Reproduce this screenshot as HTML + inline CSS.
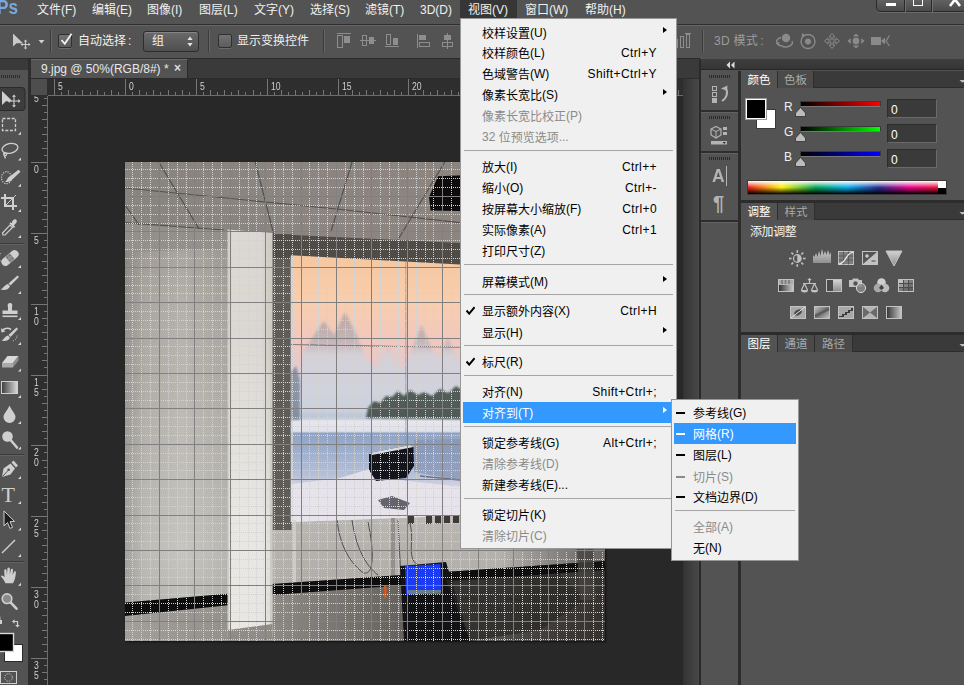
<!DOCTYPE html><html lang="zh"><head><meta charset="utf-8"><title>Photoshop</title><style>
*{box-sizing:border-box;margin:0;padding:0}
html,body{width:964px;height:685px;overflow:hidden;background:#535353}
body{position:relative;font-family:"Liberation Sans","Noto Sans CJK SC",sans-serif;font-size:12px;color:#e6e6e6}
.a{position:absolute}
.t{position:absolute;white-space:nowrap;line-height:1}
#menubar{left:0;top:0;width:964px;height:24px;background:#535353}
#menubar .t{top:4px;font-size:12px;color:#f0f0f0}
#optbar{left:0;top:24px;width:964px;height:34px;background:#535353}
.vsep{position:absolute;width:2px;border-left:1px solid #3c3c3c;border-right:1px solid #656565}
#tabbar{left:28px;top:58px;width:672px;height:21px;background:#3a3a3a;border-top:1px solid #2b2b2b;border-bottom:1px solid #2b2b2b}
#doctab{left:30px;top:59px;width:158px;height:19px;background:#535353;border-right:1px solid #2a2a2a;border-top:1px solid #6a6a6a;border-left:1px solid #666}
#canvas{left:48px;top:96px;width:635px;height:589px;background:#282828}
#hruler{left:31px;top:79px;width:652px;height:17px;background:#2e2e2e;border-bottom:1px solid #6c6c6c;overflow:hidden}
#vruler{left:31px;top:96px;width:17px;height:589px;background:#2e2e2e;border-right:1px solid #6c6c6c;overflow:hidden}
#rcorner{left:31px;top:79px;width:17px;height:17px;background:#4e4e4e;border-right:1px solid #2e2e2e;border-bottom:1px solid #2e2e2e}
.rl{position:absolute;font-size:10px;color:#d0d0d0;line-height:1;transform:scaleX(.86);transform-origin:0 0}
#vscroll{left:683px;top:79px;width:16px;height:606px;background:linear-gradient(90deg,#333 0,#3c3c3c 40%,#484848 100%)}
#toolbar{left:0;top:70px;width:28px;height:615px;background:#535353}
#tbgap{left:28px;top:59px;width:3px;height:626px;background:#2e2e2e}
.menu{position:absolute;background:#f0f0f0;border:1px solid #979797;color:#000;font-size:12px}
.mi{position:absolute;left:2px;height:21px;line-height:21px;white-space:nowrap}
.mi .l{position:absolute;left:19px;top:2px}.mi .l i{font-style:normal;position:relative;top:-1px}
.mi .s{position:absolute;right:17px;top:1px;letter-spacing:.4px}
.mi.d{color:#8a8a8a}
.mi.h{background:#3399ff;color:#fff}
.msep{position:absolute;height:1px;background:#a5a5a5}
.arr{position:absolute;width:0;height:0;border-left:4px solid #000;border-top:3.5px solid transparent;border-bottom:3.5px solid transparent}
.h .arr{border-left-color:#fff}
.chk{position:absolute;left:3px;top:6px}
.dash{position:absolute;left:2px;top:10px;width:9px;height:2px;background:#000}
.d .dash{background:#8a8a8a}.h .dash{background:#fff}
.panelhdr{position:absolute;background:#3a3a3a;border-bottom:1px solid #2a2a2a}
.ptab{position:absolute;height:17px;font-size:11.5px;line-height:19px;text-align:center;color:#a9a9a9;background:#4a4a4a;border-right:1px solid #2e2e2e}
.ptab.on{background:#535353;color:#fff}
.inp{position:absolute;width:50px;height:19px;background:#3a3a3a;border:1px solid #6a6a6a;border-top-color:#2c2c2c;border-left-color:#2c2c2c;color:#fff;font-size:12px;line-height:20px;padding-left:3px}
</style></head><body>
<div id="menubar" class="a">
<div class="a" style="left:460px;top:0;width:57px;height:19px;background:#363636"></div>
<div class="t" style="left:-3px;top:-3px;font-size:20px;font-weight:bold;color:#78a8dd;transform:scaleX(.86);transform-origin:0 0">Ps</div>
<div class="t" style="left:37px">文件(F)</div>
<div class="t" style="left:92px">编辑(E)</div>
<div class="t" style="left:147px">图像(I)</div>
<div class="t" style="left:199px">图层(L)</div>
<div class="t" style="left:254px">文字(Y)</div>
<div class="t" style="left:310px">选择(S)</div>
<div class="t" style="left:365px">滤镜(T)</div>
<div class="t" style="left:420px">3D(D)</div>
<div class="t" style="left:468px">视图(V)</div>
<div class="t" style="left:525px">窗口(W)</div>
<div class="t" style="left:585px">帮助(H)</div>
<div class="a" style="left:876px;top:-5px;width:92px;height:17px;border:1px solid #2a2a2a;border-radius:0 0 4px 4px;background:linear-gradient(#6a6a6a,#4a4a4a);box-shadow:0 1px 0 #6a6a6a"><div class="a" style="left:27px;top:0;width:1px;height:16px;background:#2a2a2a"></div><div class="a" style="left:28px;top:0;width:1px;height:16px;background:#707070"></div><div class="a" style="left:54px;top:0;width:1px;height:16px;background:#2a2a2a"></div><div class="a" style="left:55px;top:0;width:1px;height:16px;background:#707070"></div><div class="a" style="left:9px;top:7px;width:10px;height:3px;background:#fff"></div><div class="a" style="left:36px;top:-2px;width:10px;height:12px;border:2px solid #fff;border-width:1.5px"></div><svg class="a" style="left:70px;top:0" width="16" height="11" viewBox="0 0 16 11"><path d="M3 -3L13 10M13 -3L3 10" stroke="#fff" stroke-width="2.6"/></svg></div>
</div>
<div id="optbar" class="a">
<div class="a" style="left:0;top:0;width:964px;height:1px;background:#303030"></div><div class="a" style="left:0;top:1px;width:964px;height:1px;background:#646464"></div>
<svg class="a" style="left:10px;top:8px" width="36" height="18" viewBox="10 32 36 18"><path d="M13 33.5 L13 46.5 L16.5 43.2 L23 43.2 Z" fill="#c9c9c9"/><g stroke="#c9c9c9" stroke-width="1.2" fill="#c9c9c9"><path d="M25.5 40.5V48.5M21.5 44.5H29.5" fill="none"/><path d="M25.5 39.5l-1.8 2h3.6zM25.5 49.5l-1.8-2h3.6zM20.5 44.5l2-1.8v3.6zM30.5 44.5l-2-1.8v3.6z" stroke="none"/></g><path d="M38.5 40 L44.5 40 L41.5 43.5Z" fill="#d0d0d0"/></svg>
<div class="vsep" style="left:50px;top:6px;height:23px"></div>
<div class="a" style="left:58px;top:10px;width:14px;height:14px;background:linear-gradient(#727272,#5c5c5c);border:1px solid #303030;border-radius:2px;box-shadow:0 1px 0 #6a6a6a"></div>
<svg class="a" style="left:59px;top:8px" width="15" height="15" viewBox="0 0 15 15"><path d="M2.5 8 L5.8 11.8 L12.5 1.8" fill="none" stroke="#f2f2f2" stroke-width="1.8"/></svg>
<div class="t" style="left:78px;top:10px;font-size:12px;color:#f0f0f0;top:11px">自动选择<span style="margin-left:2px">:</span></div>
<div class="a" style="left:143px;top:7px;width:56px;height:21px;background:linear-gradient(#6a6a6a,#4f4f4f);border:1px solid #2d2d2d;border-radius:3px;box-shadow:inset 0 1px 0 #858585"></div>
<div class="t" style="left:152px;top:10px;font-size:12px;color:#f0f0f0;top:11px">组</div>
<svg class="a" style="left:186px;top:11px" width="8" height="13" viewBox="0 0 8 13"><path d="M4 1.5L6.6 5H1.4Z M4 11.5L6.6 8H1.4Z" fill="#e6e6e6"/></svg>
<div class="vsep" style="left:208px;top:6px;height:23px"></div>
<div class="a" style="left:218px;top:10px;width:14px;height:14px;background:linear-gradient(#727272,#5c5c5c);border:1px solid #303030;border-radius:2px;box-shadow:0 1px 0 #6a6a6a"></div>
<div class="t" style="left:237px;top:10px;font-size:12px;color:#f0f0f0;top:11px">显示变换控件</div>
<div class="vsep" style="left:323px;top:6px;height:23px"></div>
<svg class="a" style="left:330px;top:0" width="140" height="35" viewBox="330 24 140 35" fill="none" stroke="#8e8e8e" stroke-width="1" shape-rendering="crispEdges"><path d="M337 33.5H351"/><rect x="337.5" y="35.5" width="5" height="12"/><rect x="344" y="36" width="6" height="7" fill="#8e8e8e" stroke="none"/><path d="M360 40.5H376"/><rect x="362.5" y="35.5" width="4" height="10"/><rect x="369" y="37" width="5" height="7" fill="#8e8e8e" stroke="none"/><path d="M385 46.5H399"/><rect x="386.5" y="34.5" width="4" height="10"/><rect x="393" y="38" width="5" height="7" fill="#8e8e8e" stroke="none"/><path d="M417.5 34V48"/><rect x="419" y="35" width="7" height="5" fill="#8e8e8e" stroke="none"/><rect x="419.5" y="42.5" width="10" height="4"/><path d="M447.5 33V49"/><rect x="444" y="35" width="7" height="5" fill="#8e8e8e" stroke="none"/><rect x="442.5" y="42.5" width="10" height="4"/></svg>
<svg class="a" style="left:672px;top:0" width="30" height="35" viewBox="672 24 30 35" fill="none" stroke="#8e8e8e" shape-rendering="crispEdges"><rect x="674.5" y="39.5" width="3" height="8"/><rect x="680.5" y="36.5" width="3" height="11"/><rect x="686.5" y="34.5" width="3" height="13"/><path d="M685 33.5H691"/></svg>
<div class="vsep" style="left:702px;top:6px;height:23px"></div>
<div class="t" style="left:714px;top:10px;font-size:12px;color:#9c9c9c;letter-spacing:.3px;top:11px">3D 模式<span style="margin-left:2px">:</span></div>
<svg class="a" style="left:770px;top:0" width="125" height="35" viewBox="770 24 125 35" fill="none" stroke="#8a8a8a" stroke-width="1.4"><circle cx="786" cy="38" r="4.2" fill="#8a8a8a" stroke="none"/><path d="M781 37.5C776 39 775 43 779 45.5 M779 45.5l-0.5-3.5 M779 45.5l3.6 0.2 M782 46.5C788 48 794 45 792 41"/><circle cx="808" cy="41.5" r="7"/><circle cx="808" cy="41.5" r="3" fill="#8a8a8a" stroke="none"/><path d="M802 33l3.5 2.5l-3.8 1.2z" fill="#8a8a8a" stroke="none"/><path d="M832 33.5l3 3.5h-2v3h3v-2l3.5 3l-3.5 3v-2h-3v3h2l-3 3.5l-3-3.5h2v-3h-3v2l-3.5-3l3.5-3v2h3v-3h-2z" stroke-width="1"/><circle cx="856" cy="41" r="3.4" fill="#8a8a8a" stroke="none"/><path d="M856 33.5l3.2 3h-6.4zM856 48.5l3.2-3h-6.4zM847.5 41l3.2-3v6zM864.5 41l-3.2-3v6z" fill="#8a8a8a" stroke="none"/><rect x="871" y="37" width="10" height="8" fill="#8a8a8a" stroke="none"/><path d="M881 41l4-3.5v7z" fill="#8a8a8a" stroke="none"/><path d="M889.5 35.5l-3.5 5.5l3.5 5" stroke-width="1.2"/></svg>
</div>
<div id="tabbar" class="a"></div>
<div id="doctab" class="a"><div class="t" style="left:10px;top:3px;font-size:12px;color:#e8e8e8">9.jpg @ 50%(RGB/8#) *</div><div class="t" style="left:143px;top:2px;font-size:12px;color:#ddd;font-weight:bold">×</div></div>
<div id="canvas" class="a"></div>
<svg class="a" style="left:125px;top:162px;box-shadow:1px 1px 2px rgba(0,0,0,.6)" width="480" height="479" viewBox="125 162 480 479">
<defs><filter id="bl" x="-5%" y="-5%" width="110%" height="110%"><feGaussianBlur stdDeviation="1.6"/></filter><filter id="bl1"><feGaussianBlur stdDeviation="0.8"/></filter>
<linearGradient id="gceil" gradientUnits="userSpaceOnUse" x1="125" y1="162" x2="420" y2="300"><stop offset="0" stop-color="#888480"/><stop offset=".5" stop-color="#8b8581"/><stop offset="1" stop-color="#8c847f"/></linearGradient>
<linearGradient id="gwall" gradientUnits="userSpaceOnUse" x1="0" x2="0" y1="250" y2="600"><stop offset="0" stop-color="#a5a19a"/><stop offset=".15" stop-color="#b0ada6"/><stop offset=".45" stop-color="#b9b6b0"/><stop offset=".85" stop-color="#c4c2bd"/><stop offset="1" stop-color="#bdbbb6"/></linearGradient><linearGradient id="gwl" gradientUnits="userSpaceOnUse" x1="125" x2="228" y1="0" y2="0"><stop offset="0" stop-color="#000" stop-opacity=".16"/><stop offset=".2" stop-color="#000" stop-opacity=".03"/><stop offset=".55" stop-color="#fff" stop-opacity=".05"/><stop offset="1" stop-color="#000" stop-opacity=".06"/></linearGradient>
<linearGradient id="gcol" x1="0" x2="1" y1="0" y2="0"><stop offset="0" stop-color="#cfccc6"/><stop offset=".12" stop-color="#dcd9d3"/><stop offset=".75" stop-color="#dad7d1"/><stop offset="1" stop-color="#cbc8c2"/></linearGradient>
<linearGradient id="gscr" gradientUnits="userSpaceOnUse" x1="0" x2="0" y1="255" y2="522">
<stop offset="0" stop-color="#f5c79f"/><stop offset=".17" stop-color="#f8ceae"/><stop offset=".32" stop-color="#f1c8bd"/><stop offset=".43" stop-color="#e2cbd0"/>
<stop offset=".47" stop-color="#d9d3dc"/><stop offset=".524" stop-color="#d2d7e1"/><stop offset=".61" stop-color="#bcc6d6"/><stop offset=".622" stop-color="#e6e6ec"/><stop offset=".66" stop-color="#e0e1ea"/><stop offset=".668" stop-color="#90a3c3"/>
<stop offset=".75" stop-color="#a2b2cf"/><stop offset=".824" stop-color="#b6c0d6"/><stop offset=".88" stop-color="#dcdae5"/><stop offset="1" stop-color="#e4e0e6"/></linearGradient>
<linearGradient id="gmt" gradientUnits="userSpaceOnUse" x1="0" x2="0" y1="310" y2="415"><stop offset="0" stop-color="#b3a3a3" stop-opacity=".92"/><stop offset=".3" stop-color="#bfb2b6" stop-opacity=".88"/><stop offset=".43" stop-color="#d3d1d9" stop-opacity=".92"/><stop offset="1" stop-color="#cdd2dd" stop-opacity=".88"/></linearGradient>
<linearGradient id="gfloor" gradientUnits="userSpaceOnUse" x1="125" x2="605" y1="0" y2="0"><stop offset="0" stop-color="#a29e99"/><stop offset=".3" stop-color="#8e8a85"/><stop offset=".55" stop-color="#696561"/><stop offset=".75" stop-color="#534f4c"/><stop offset="1" stop-color="#4e4a47"/></linearGradient>
<linearGradient id="gwallr" x1="0" x2="0" y1="0" y2="1"><stop offset="0" stop-color="#bcb9b4"/><stop offset="1" stop-color="#a9a6a1"/></linearGradient>
<linearGradient id="gdk" gradientUnits="userSpaceOnUse" x1="500" x2="605" y1="0" y2="0"><stop offset="0" stop-color="#000" stop-opacity="0"/><stop offset="1" stop-color="#1a1716" stop-opacity=".5"/></linearGradient><linearGradient id="gcw" gradientUnits="userSpaceOnUse" x1="0" x2="0" y1="330" y2="520"><stop offset="0" stop-color="#fff" stop-opacity="0"/><stop offset="1" stop-color="#fff" stop-opacity=".38"/></linearGradient></defs>
<rect x="125" y="162" width="480" height="479" fill="url(#gceil)"/>
<g stroke="#4b4845" stroke-width="1.2" fill="none" opacity=".85"><path d="M158.7 162L212.8 251.7"/><path d="M255.3 162L274.7 238"/><path d="M352 162L330.8 232"/><path d="M444.8 162L390.7 251.7"/><path d="M125 188L336.6 209L460 222.7L605 240"/><path d="M125 222.7L224 230"/><path d="M125 205L150 240"/><path d="M540 162L505 258"/></g>
<polygon points="125,224 228,231 228,250 125,252" fill="#938f8a"/>
<polygon points="125,252 228,249 228,641 125,641" fill="url(#gwall)"/>
<polygon points="125,252 228,249 228,641 125,641" fill="url(#gwl)"/>
<polygon points="272,236 605,250 605,641 272,641" fill="#6e6a65"/>
<rect x="272" y="500" width="333" height="141" fill="url(#gwallr)"/>
<rect x="272.5" y="234" width="19" height="296" fill="#5f5c58"/>
<polygon points="272.5,234 460,243 605,250 605,275 272.5,258" fill="#4f4c48"/>
<polygon points="429,197 438,176.3 605,170 605,214 430.5,210.5" fill="#0d0b0b"/>
<polygon points="227.5,229.5 272.5,233 272.5,637 227.5,637" fill="url(#gcol)"/>
<rect x="229" y="330" width="41" height="307" fill="url(#gcw)"/>
<polygon points="290.8,255.3 605,272.3 605,510 290.8,522" fill="url(#gscr)"/>
<rect x="290.8" y="256" width="2" height="266" fill="#c9d4ee" opacity=".8"/>
<path d="M296 412 L303 352 L312 338 L324 321 L334 335 L345 312 L357 336 L366 360 L377 368 L388.8 347 L399 372 L408 360 L421.6 325 L433 352 L440 356 L448 338 L459 362 L470 350 L480 330 L495 360 L520 340 L540 365 L605 350 L605 412 Z" fill="url(#gmt)" filter="url(#bl)"/>
<path d="M291 344.5 L362 346 L605 349" stroke="#5a5560" stroke-width="1" opacity=".7"/>
<rect x="405" y="262" width="1.5" height="255" fill="#8e8a94" opacity=".45"/>
<path d="M291 372 L296 366 L300 380 L300 420 L291 420Z" fill="#5a6a80" opacity=".6" filter="url(#bl1)"/>
<path d="M366 418 L368 408 L374 401 L380 403 L386 396 L392 397 L398 391 L404 396 L410 390 L418 395 L424 392 L432 396 L440 389 L448 393 L456 386 L462 390 L480 384 L520 388 L560 380 L605 384 L605 418 L520 420 Z" fill="#3f4b45" opacity=".88" filter="url(#bl1)"/>
<path d="M291 484 L340 478 L372 468 L400 480 L470 488 L605 482 L605 510 L291 522Z" fill="#e7e3ea" opacity=".9"/><path d="M414 440 L605 436 L605 478 L470 482 L414 472Z" fill="#8593b2" opacity=".7"/>
<path d="M369 453 L395 448 L410 445 L413.5 447 L414 466 L406 478 L376 481 L369 470Z" fill="#15161c"/>
<path d="M369 453 L410 445 L413.5 447 L372 455Z" fill="#dcdce4"/>
<path d="M378 500 L392 496 L410 503 L404 510 L384 508Z" fill="#3a3a44" opacity=".75"/>
<path d="M420 476 L460 480 L605 500" stroke="#3a3a44" stroke-width="1.5" opacity=".6" fill="none"/>
<g fill="#3d3a38"><rect x="408" y="516" width="6" height="8"/><rect x="426" y="516" width="6" height="8"/><rect x="435" y="515.5" width="6" height="8"/><rect x="444" y="515" width="6" height="8"/><rect x="453" y="515" width="6" height="8"/></g>
<rect x="293" y="520" width="3" height="121" fill="#d4d2ce" opacity=".8"/>
<rect x="391" y="518" width="4" height="123" fill="#8f8c88" opacity=".9"/>
<g stroke="#3c3a40" stroke-width="1" fill="none" opacity=".85"><path d="M337 520 C340 545 348 560 362 572 C372 578 376 560 368 522"/><path d="M352 520 C356 548 366 566 378 575"/><path d="M398 520 L402 600"/><path d="M410 524 C415 540 405 560 420 566"/></g>
<polygon points="125,602.4 228,593.7 228,641 125,641" fill="url(#gfloor)"/>
<polygon points="125,602.4 228,593.7 228,605.3 125,616" fill="#0e0d0d"/>
<polygon points="272.5,584 605,561 605,641 272.5,641" fill="url(#gfloor)"/>
<polygon points="272.5,584 605,561 605,570 272.5,595" fill="#0f0e0e"/>
<polygon points="227.5,560 272.5,560 272.5,637 227.5,637" fill="url(#gcol)"/>
<rect x="229" y="560" width="41" height="77" fill="#fff" opacity=".38"/>
<polygon points="227.5,630 272.5,624 272.5,641 227.5,641" fill="#8f8b86"/>
<rect x="500" y="510" width="105" height="131" fill="url(#gdk)"/>
<polygon points="400,566 446,562 470,641 404,641" fill="#131214"/>
<polygon points="446,580 560,574 585,600 540,630 470,641" fill="#2b2927" opacity=".75"/>
<polygon points="575,520 592,520 596,600 580,600" fill="#45423f" opacity=".8"/>
<polygon points="405,566 440.5,564 441.5,592 406,595" fill="#1b3bf2"/>
<rect x="407" y="590" width="34" height="4" fill="#7a8c7a" opacity=".8"/>
<path d="M461 600 C480 590 500 620 520 612 C530 606 520 596 505 600" stroke="#2a2826" stroke-width="1.5" fill="none" opacity=".7"/>
<rect x="384" y="586" width="2.5" height="12" fill="#d2581e"/><rect x="398" y="604" width="2" height="8" fill="#d2581e"/>
<g shape-rendering="crispEdges" stroke-width="1">
<path d="M132.5 162V641M141.5 162V641M150.5 162V641M168.5 162V641M177.5 162V641M186.5 162V641M203.5 162V641M212.5 162V641M221.5 162V641M239.5 162V641M248.5 162V641M256.5 162V641M274.5 162V641M283.5 162V641M292.5 162V641M309.5 162V641M318.5 162V641M327.5 162V641M345.5 162V641M354.5 162V641M363.5 162V641M380.5 162V641M389.5 162V641M398.5 162V641M416.5 162V641M425.5 162V641M433.5 162V641M451.5 162V641M460.5 162V641M469.5 162V641M486.5 162V641M495.5 162V641M504.5 162V641M522.5 162V641M531.5 162V641M540.5 162V641M557.5 162V641M566.5 162V641M575.5 162V641M593.5 162V641M602.5 162V641M125 169.5H605M125 178.5H605M125 187.5H605M125 205.5H605M125 214.5H605M125 223.5H605M125 240.5H605M125 249.5H605M125 258.5H605M125 276.5H605M125 285.5H605M125 293.5H605M125 311.5H605M125 320.5H605M125 329.5H605M125 346.5H605M125 355.5H605M125 364.5H605M125 382.5H605M125 391.5H605M125 400.5H605M125 417.5H605M125 426.5H605M125 435.5H605M125 453.5H605M125 462.5H605M125 470.5H605M125 488.5H605M125 497.5H605M125 506.5H605M125 523.5H605M125 532.5H605M125 541.5H605M125 559.5H605M125 568.5H605M125 577.5H605M125 594.5H605M125 603.5H605M125 612.5H605M125 630.5H605M125 639.5H605" stroke="#d2d2d2" stroke-dasharray="1 1" fill="none"/>
<path d="M159.5 162V641M194.5 162V641M230.5 162V641M265.5 162V641M301.5 162V641M336.5 162V641M371.5 162V641M407.5 162V641M442.5 162V641M478.5 162V641M513.5 162V641M548.5 162V641M584.5 162V641M125 196.5H605M125 231.5H605M125 267.5H605M125 302.5H605M125 338.5H605M125 373.5H605M125 408.5H605M125 444.5H605M125 479.5H605M125 515.5H605M125 550.5H605M125 585.5H605M125 621.5H605" stroke="#808080" fill="none"/>
</g>
</svg>
<div id="hruler" class="a"><div class="a" style="left:23px;bottom:0;width:1px;height:16px;background:#767676"></div><div class="rl" style="left:27px;top:3px">5</div><div class="a" style="left:30px;bottom:0;width:1px;height:3px;background:#767676"></div><div class="a" style="left:37px;bottom:0;width:1px;height:5px;background:#767676"></div><div class="a" style="left:44px;bottom:0;width:1px;height:3px;background:#767676"></div><div class="a" style="left:51px;bottom:0;width:1px;height:5px;background:#767676"></div><div class="a" style="left:59px;bottom:0;width:1px;height:3px;background:#767676"></div><div class="a" style="left:66px;bottom:0;width:1px;height:5px;background:#767676"></div><div class="a" style="left:73px;bottom:0;width:1px;height:3px;background:#767676"></div><div class="a" style="left:80px;bottom:0;width:1px;height:5px;background:#767676"></div><div class="a" style="left:87px;bottom:0;width:1px;height:3px;background:#767676"></div><div class="a" style="left:94px;bottom:0;width:1px;height:16px;background:#767676"></div><div class="rl" style="left:98px;top:3px">0</div><div class="a" style="left:101px;bottom:0;width:1px;height:3px;background:#767676"></div><div class="a" style="left:108px;bottom:0;width:1px;height:5px;background:#767676"></div><div class="a" style="left:115px;bottom:0;width:1px;height:3px;background:#767676"></div><div class="a" style="left:122px;bottom:0;width:1px;height:5px;background:#767676"></div><div class="a" style="left:129px;bottom:0;width:1px;height:3px;background:#767676"></div><div class="a" style="left:137px;bottom:0;width:1px;height:5px;background:#767676"></div><div class="a" style="left:144px;bottom:0;width:1px;height:3px;background:#767676"></div><div class="a" style="left:151px;bottom:0;width:1px;height:5px;background:#767676"></div><div class="a" style="left:158px;bottom:0;width:1px;height:3px;background:#767676"></div><div class="a" style="left:165px;bottom:0;width:1px;height:16px;background:#767676"></div><div class="rl" style="left:169px;top:3px">5</div><div class="a" style="left:172px;bottom:0;width:1px;height:3px;background:#767676"></div><div class="a" style="left:179px;bottom:0;width:1px;height:5px;background:#767676"></div><div class="a" style="left:186px;bottom:0;width:1px;height:3px;background:#767676"></div><div class="a" style="left:193px;bottom:0;width:1px;height:5px;background:#767676"></div><div class="a" style="left:200px;bottom:0;width:1px;height:3px;background:#767676"></div><div class="a" style="left:207px;bottom:0;width:1px;height:5px;background:#767676"></div><div class="a" style="left:214px;bottom:0;width:1px;height:3px;background:#767676"></div><div class="a" style="left:222px;bottom:0;width:1px;height:5px;background:#767676"></div><div class="a" style="left:229px;bottom:0;width:1px;height:3px;background:#767676"></div><div class="a" style="left:236px;bottom:0;width:1px;height:16px;background:#767676"></div><div class="rl" style="left:240px;top:3px">10</div><div class="a" style="left:243px;bottom:0;width:1px;height:3px;background:#767676"></div><div class="a" style="left:250px;bottom:0;width:1px;height:5px;background:#767676"></div><div class="a" style="left:257px;bottom:0;width:1px;height:3px;background:#767676"></div><div class="a" style="left:264px;bottom:0;width:1px;height:5px;background:#767676"></div><div class="a" style="left:271px;bottom:0;width:1px;height:3px;background:#767676"></div><div class="a" style="left:278px;bottom:0;width:1px;height:5px;background:#767676"></div><div class="a" style="left:285px;bottom:0;width:1px;height:3px;background:#767676"></div><div class="a" style="left:292px;bottom:0;width:1px;height:5px;background:#767676"></div><div class="a" style="left:299px;bottom:0;width:1px;height:3px;background:#767676"></div><div class="a" style="left:307px;bottom:0;width:1px;height:16px;background:#767676"></div><div class="rl" style="left:311px;top:3px">15</div><div class="a" style="left:314px;bottom:0;width:1px;height:3px;background:#767676"></div><div class="a" style="left:321px;bottom:0;width:1px;height:5px;background:#767676"></div><div class="a" style="left:328px;bottom:0;width:1px;height:3px;background:#767676"></div><div class="a" style="left:335px;bottom:0;width:1px;height:5px;background:#767676"></div><div class="a" style="left:342px;bottom:0;width:1px;height:3px;background:#767676"></div><div class="a" style="left:349px;bottom:0;width:1px;height:5px;background:#767676"></div><div class="a" style="left:356px;bottom:0;width:1px;height:3px;background:#767676"></div><div class="a" style="left:363px;bottom:0;width:1px;height:5px;background:#767676"></div><div class="a" style="left:370px;bottom:0;width:1px;height:3px;background:#767676"></div><div class="a" style="left:377px;bottom:0;width:1px;height:16px;background:#767676"></div><div class="rl" style="left:381px;top:3px">20</div><div class="a" style="left:384px;bottom:0;width:1px;height:3px;background:#767676"></div><div class="a" style="left:392px;bottom:0;width:1px;height:5px;background:#767676"></div><div class="a" style="left:399px;bottom:0;width:1px;height:3px;background:#767676"></div><div class="a" style="left:406px;bottom:0;width:1px;height:5px;background:#767676"></div><div class="a" style="left:413px;bottom:0;width:1px;height:3px;background:#767676"></div><div class="a" style="left:420px;bottom:0;width:1px;height:5px;background:#767676"></div><div class="a" style="left:427px;bottom:0;width:1px;height:3px;background:#767676"></div><div class="a" style="left:434px;bottom:0;width:1px;height:5px;background:#767676"></div><div class="a" style="left:441px;bottom:0;width:1px;height:3px;background:#767676"></div><div class="a" style="left:448px;bottom:0;width:1px;height:16px;background:#767676"></div><div class="rl" style="left:452px;top:3px">25</div><div class="a" style="left:455px;bottom:0;width:1px;height:3px;background:#767676"></div><div class="a" style="left:462px;bottom:0;width:1px;height:5px;background:#767676"></div><div class="a" style="left:470px;bottom:0;width:1px;height:3px;background:#767676"></div><div class="a" style="left:477px;bottom:0;width:1px;height:5px;background:#767676"></div><div class="a" style="left:484px;bottom:0;width:1px;height:3px;background:#767676"></div><div class="a" style="left:491px;bottom:0;width:1px;height:5px;background:#767676"></div><div class="a" style="left:498px;bottom:0;width:1px;height:3px;background:#767676"></div><div class="a" style="left:505px;bottom:0;width:1px;height:5px;background:#767676"></div><div class="a" style="left:512px;bottom:0;width:1px;height:3px;background:#767676"></div><div class="a" style="left:519px;bottom:0;width:1px;height:16px;background:#767676"></div><div class="rl" style="left:523px;top:3px">30</div><div class="a" style="left:526px;bottom:0;width:1px;height:3px;background:#767676"></div><div class="a" style="left:533px;bottom:0;width:1px;height:5px;background:#767676"></div><div class="a" style="left:540px;bottom:0;width:1px;height:3px;background:#767676"></div><div class="a" style="left:547px;bottom:0;width:1px;height:5px;background:#767676"></div><div class="a" style="left:555px;bottom:0;width:1px;height:3px;background:#767676"></div><div class="a" style="left:562px;bottom:0;width:1px;height:5px;background:#767676"></div><div class="a" style="left:569px;bottom:0;width:1px;height:3px;background:#767676"></div><div class="a" style="left:576px;bottom:0;width:1px;height:5px;background:#767676"></div><div class="a" style="left:583px;bottom:0;width:1px;height:3px;background:#767676"></div><div class="a" style="left:590px;bottom:0;width:1px;height:16px;background:#767676"></div><div class="rl" style="left:594px;top:3px">35</div><div class="a" style="left:597px;bottom:0;width:1px;height:3px;background:#767676"></div><div class="a" style="left:604px;bottom:0;width:1px;height:5px;background:#767676"></div><div class="a" style="left:611px;bottom:0;width:1px;height:3px;background:#767676"></div><div class="a" style="left:618px;bottom:0;width:1px;height:5px;background:#767676"></div><div class="a" style="left:625px;bottom:0;width:1px;height:3px;background:#767676"></div><div class="a" style="left:632px;bottom:0;width:1px;height:5px;background:#767676"></div><div class="a" style="left:640px;bottom:0;width:1px;height:3px;background:#767676"></div><div class="a" style="left:647px;bottom:0;width:1px;height:5px;background:#767676"></div></div>
<div id="vruler" class="a"><div class="rl" style="left:3px;top:-2px">5</div><div class="a" style="top:2px;right:0;height:1px;width:3px;background:#767676"></div><div class="a" style="top:9px;right:0;height:1px;width:5px;background:#767676"></div><div class="a" style="top:16px;right:0;height:1px;width:3px;background:#767676"></div><div class="a" style="top:23px;right:0;height:1px;width:5px;background:#767676"></div><div class="a" style="top:31px;right:0;height:1px;width:3px;background:#767676"></div><div class="a" style="top:38px;right:0;height:1px;width:5px;background:#767676"></div><div class="a" style="top:45px;right:0;height:1px;width:3px;background:#767676"></div><div class="a" style="top:52px;right:0;height:1px;width:5px;background:#767676"></div><div class="a" style="top:59px;right:0;height:1px;width:3px;background:#767676"></div><div class="a" style="top:66px;right:0;height:1px;width:16px;background:#767676"></div><div class="rl" style="left:3px;top:69px">0</div><div class="a" style="top:73px;right:0;height:1px;width:3px;background:#767676"></div><div class="a" style="top:80px;right:0;height:1px;width:5px;background:#767676"></div><div class="a" style="top:87px;right:0;height:1px;width:3px;background:#767676"></div><div class="a" style="top:94px;right:0;height:1px;width:5px;background:#767676"></div><div class="a" style="top:101px;right:0;height:1px;width:3px;background:#767676"></div><div class="a" style="top:109px;right:0;height:1px;width:5px;background:#767676"></div><div class="a" style="top:116px;right:0;height:1px;width:3px;background:#767676"></div><div class="a" style="top:123px;right:0;height:1px;width:5px;background:#767676"></div><div class="a" style="top:130px;right:0;height:1px;width:3px;background:#767676"></div><div class="a" style="top:137px;right:0;height:1px;width:16px;background:#767676"></div><div class="rl" style="left:3px;top:140px">5</div><div class="a" style="top:144px;right:0;height:1px;width:3px;background:#767676"></div><div class="a" style="top:151px;right:0;height:1px;width:5px;background:#767676"></div><div class="a" style="top:158px;right:0;height:1px;width:3px;background:#767676"></div><div class="a" style="top:165px;right:0;height:1px;width:5px;background:#767676"></div><div class="a" style="top:172px;right:0;height:1px;width:3px;background:#767676"></div><div class="a" style="top:179px;right:0;height:1px;width:5px;background:#767676"></div><div class="a" style="top:186px;right:0;height:1px;width:3px;background:#767676"></div><div class="a" style="top:194px;right:0;height:1px;width:5px;background:#767676"></div><div class="a" style="top:201px;right:0;height:1px;width:3px;background:#767676"></div><div class="a" style="top:208px;right:0;height:1px;width:16px;background:#767676"></div><div class="rl" style="left:3px;top:211px">1</div><div class="rl" style="left:3px;top:221px">0</div><div class="a" style="top:215px;right:0;height:1px;width:3px;background:#767676"></div><div class="a" style="top:222px;right:0;height:1px;width:5px;background:#767676"></div><div class="a" style="top:229px;right:0;height:1px;width:3px;background:#767676"></div><div class="a" style="top:236px;right:0;height:1px;width:5px;background:#767676"></div><div class="a" style="top:243px;right:0;height:1px;width:3px;background:#767676"></div><div class="a" style="top:250px;right:0;height:1px;width:5px;background:#767676"></div><div class="a" style="top:257px;right:0;height:1px;width:3px;background:#767676"></div><div class="a" style="top:264px;right:0;height:1px;width:5px;background:#767676"></div><div class="a" style="top:271px;right:0;height:1px;width:3px;background:#767676"></div><div class="a" style="top:279px;right:0;height:1px;width:16px;background:#767676"></div><div class="rl" style="left:3px;top:282px">1</div><div class="rl" style="left:3px;top:292px">5</div><div class="a" style="top:286px;right:0;height:1px;width:3px;background:#767676"></div><div class="a" style="top:293px;right:0;height:1px;width:5px;background:#767676"></div><div class="a" style="top:300px;right:0;height:1px;width:3px;background:#767676"></div><div class="a" style="top:307px;right:0;height:1px;width:5px;background:#767676"></div><div class="a" style="top:314px;right:0;height:1px;width:3px;background:#767676"></div><div class="a" style="top:321px;right:0;height:1px;width:5px;background:#767676"></div><div class="a" style="top:328px;right:0;height:1px;width:3px;background:#767676"></div><div class="a" style="top:335px;right:0;height:1px;width:5px;background:#767676"></div><div class="a" style="top:342px;right:0;height:1px;width:3px;background:#767676"></div><div class="a" style="top:349px;right:0;height:1px;width:16px;background:#767676"></div><div class="rl" style="left:3px;top:352px">2</div><div class="rl" style="left:3px;top:362px">0</div><div class="a" style="top:356px;right:0;height:1px;width:3px;background:#767676"></div><div class="a" style="top:364px;right:0;height:1px;width:5px;background:#767676"></div><div class="a" style="top:371px;right:0;height:1px;width:3px;background:#767676"></div><div class="a" style="top:378px;right:0;height:1px;width:5px;background:#767676"></div><div class="a" style="top:385px;right:0;height:1px;width:3px;background:#767676"></div><div class="a" style="top:392px;right:0;height:1px;width:5px;background:#767676"></div><div class="a" style="top:399px;right:0;height:1px;width:3px;background:#767676"></div><div class="a" style="top:406px;right:0;height:1px;width:5px;background:#767676"></div><div class="a" style="top:413px;right:0;height:1px;width:3px;background:#767676"></div><div class="a" style="top:420px;right:0;height:1px;width:16px;background:#767676"></div><div class="rl" style="left:3px;top:423px">2</div><div class="rl" style="left:3px;top:433px">5</div><div class="a" style="top:427px;right:0;height:1px;width:3px;background:#767676"></div><div class="a" style="top:434px;right:0;height:1px;width:5px;background:#767676"></div><div class="a" style="top:442px;right:0;height:1px;width:3px;background:#767676"></div><div class="a" style="top:449px;right:0;height:1px;width:5px;background:#767676"></div><div class="a" style="top:456px;right:0;height:1px;width:3px;background:#767676"></div><div class="a" style="top:463px;right:0;height:1px;width:5px;background:#767676"></div><div class="a" style="top:470px;right:0;height:1px;width:3px;background:#767676"></div><div class="a" style="top:477px;right:0;height:1px;width:5px;background:#767676"></div><div class="a" style="top:484px;right:0;height:1px;width:3px;background:#767676"></div><div class="a" style="top:491px;right:0;height:1px;width:16px;background:#767676"></div><div class="rl" style="left:3px;top:494px">3</div><div class="rl" style="left:3px;top:504px">0</div><div class="a" style="top:498px;right:0;height:1px;width:3px;background:#767676"></div><div class="a" style="top:505px;right:0;height:1px;width:5px;background:#767676"></div><div class="a" style="top:512px;right:0;height:1px;width:3px;background:#767676"></div><div class="a" style="top:519px;right:0;height:1px;width:5px;background:#767676"></div><div class="a" style="top:527px;right:0;height:1px;width:3px;background:#767676"></div><div class="a" style="top:534px;right:0;height:1px;width:5px;background:#767676"></div><div class="a" style="top:541px;right:0;height:1px;width:3px;background:#767676"></div><div class="a" style="top:548px;right:0;height:1px;width:5px;background:#767676"></div><div class="a" style="top:555px;right:0;height:1px;width:3px;background:#767676"></div><div class="a" style="top:562px;right:0;height:1px;width:16px;background:#767676"></div><div class="rl" style="left:3px;top:565px">3</div><div class="rl" style="left:3px;top:575px">5</div><div class="a" style="top:569px;right:0;height:1px;width:3px;background:#767676"></div><div class="a" style="top:576px;right:0;height:1px;width:5px;background:#767676"></div><div class="a" style="top:583px;right:0;height:1px;width:3px;background:#767676"></div></div>
<div id="rcorner" class="a"></div>
<div id="vscroll" class="a"></div>
<div class="a" style="left:699px;top:59px;width:2px;height:626px;background:#2a2a2a"></div>
<div id="tbgap" class="a"></div>
<div class="a" style="left:0;top:58px;width:28px;height:13px;background:#3a3a3a;border-bottom:1px solid #2a2a2a;border-top:1px solid #2b2b2b"></div>
<div id="toolbar" class="a"><svg class="a" style="left:0;top:0" width="28" height="615" viewBox="0 70 28 615">
<g fill="#2c2c2c"><rect x="1" y="75" width="1" height="3"/><rect x="3" y="75" width="1" height="3"/><rect x="5" y="75" width="1" height="3"/><rect x="7" y="75" width="1" height="3"/><rect x="9" y="75" width="1" height="3"/><rect x="11" y="75" width="1" height="3"/><rect x="13" y="75" width="1" height="3"/><rect x="15" y="75" width="1" height="3"/><rect x="17" y="75" width="1" height="3"/><rect x="19" y="75" width="1" height="3"/></g>
<rect x="-2" y="87.5" width="27" height="23" rx="3" fill="#3d3d3d" stroke="#2a2a2a"/>
<path d="M2 91 L2 105 L6 101.3 L12.5 101.3Z" fill="#cfcfcf"/><g stroke="#cfcfcf" fill="none" stroke-width="1.1"><path d="M14 96V106M9 101H19" transform="translate(0,0)"/></g><path d="M14 94.5l-2 2.2h4zM14 107.5l-2-2.2h4zM7.5 101l2.2-2v4zM20.5 101l-2.2-2v4z" fill="#cfcfcf"/>
<rect x="2.5" y="118.5" width="13" height="12" fill="none" stroke="#cfcfcf" stroke-width="1.3" stroke-dasharray="3 1.6"/><path d="M21 134.8L21 131.8L18 134.8Z" fill="#d8d8d8"/>
<g fill="none" stroke="#cfcfcf" stroke-width="1.3"><ellipse cx="10" cy="148.4" rx="8" ry="4.8" transform="rotate(-12 10 148.4)"/><path d="M4.5 152.4c-2 2 0 4 1.5 3c1.5-1 0-3-1.5-2c-1 1 0 3 1 5"/></g><path d="M21 160.4L21 157.4L18 160.4Z" fill="#d8d8d8"/>
<g fill="none" stroke="#cfcfcf"><ellipse cx="6.5" cy="177.7" rx="5" ry="6" stroke-dasharray="1.2 1.2" stroke-width="1.2"/></g><path d="M18.5 169.7L20.5 171.7L12 179.7C10 182.2 7 181.7 5 182.2C7.5 179.7 7 177.7 10 176.2Z" fill="#cfcfcf"/><path d="M21 186.7L21 183.7L18 186.7Z" fill="#d8d8d8"/>
<g fill="none" stroke="#cfcfcf" stroke-width="2"><path d="M5 194V206H17"/><path d="M1 198H13V210"/></g><path d="M4 207L16 195" stroke="#cfcfcf" stroke-width="1"/><path d="M21 212L21 209L18 212Z" fill="#d8d8d8"/>
<path d="M3 235L2.5 233L10 225L12.5 227.5L5 235Z" fill="none" stroke="#cfcfcf" stroke-width="1.2"/><path d="M9.5 223.5L14 228L15.2 226.8L13.8 225.4C17 223 17.5 220.5 16 219.5C14.5 218.5 12.5 220 11.6 223.2L10.6 222.2Z" fill="#cfcfcf"/><path d="M21 238L21 235L18 238Z" fill="#d8d8d8"/>
<rect x="0" y="243" width="24" height="1" fill="#3a3a3a"/><rect x="0" y="244" width="24" height="1" fill="#626262"/>
<g transform="rotate(-40 10 258)"><rect x="0" y="254" width="20" height="8" rx="4" fill="#cfcfcf"/><rect x="7" y="254" width="6" height="8" fill="#8f8f8f"/><g fill="#555"><rect x="8" y="255.5" width="1" height="1"/><rect x="11" y="255.5" width="1" height="1"/><rect x="8" y="259" width="1" height="1"/><rect x="11" y="259" width="1" height="1"/></g></g><path d="M1 253a5 6 0 0 0 0 9" fill="none" stroke="#cfcfcf" stroke-dasharray="1.2 1.2"/><path d="M21 268L21 265L18 268Z" fill="#d8d8d8"/>
<path d="M17.5 275.5L19 277L10.5 285.5L8.5 283.5Z" fill="#cfcfcf"/><path d="M8 284L10 286.2C8.5 290 4 290.5 0.5 289.5C3.5 288.5 4 285 8 284Z" fill="#cfcfcf"/><path d="M21 294L21 291L18 294Z" fill="#d8d8d8"/>
<path d="M8 307C6 301.5 14 301.5 12 307L12 310.5L17.5 310.5L17.5 314L2.5 314L2.5 310.5L8 310.5Z" fill="#cfcfcf"/><rect x="2.5" y="315.5" width="15" height="1.6" fill="#cfcfcf"/><path d="M21 320L21 317L18 320Z" fill="#d8d8d8"/>
<path d="M16.5 327.5L18 329L10.5 337L8.5 335Z" fill="#cfcfcf"/><path d="M8 335.5L10 337.7C8.5 341 4.5 341.5 1.5 340.5C4 339.5 4.5 336.5 8 335.5Z" fill="#cfcfcf"/><path d="M2 331C5 327 9 328 11 329.5" fill="none" stroke="#cfcfcf" stroke-width="1.6"/><path d="M1 328L1.5 332.5L5.5 331.5Z" fill="#cfcfcf"/><path d="M13 341a6 6 0 0 0 4-6" fill="none" stroke="#cfcfcf" stroke-dasharray="1.2 1.2"/><path d="M21 345L21 342L18 345Z" fill="#d8d8d8"/>
<path d="M7.5 356.0L18.5 356.0L13 363.0L2 363.0Z" fill="#d9d9d9"/><path d="M2 363.0L13 363.0L13 367.5L2 367.5Z" fill="#a9a9a9"/><path d="M13 363.0L18.5 356.0L18.5 360.5L13 367.5Z" fill="#8d8d8d"/><path d="M21 371.5L21 368.5L18 371.5Z" fill="#d8d8d8"/>
<defs><linearGradient id="tg" x1="0" x2="1"><stop offset="0" stop-color="#3c3c3c"/><stop offset="1" stop-color="#dcdcdc"/></linearGradient></defs><rect x="1.5" y="381.5" width="16" height="12" fill="url(#tg)" stroke="#cfcfcf" stroke-width="1"/><path d="M21 398L21 395L18 398Z" fill="#d8d8d8"/>
<path d="M9.5 405.5C12 411 15.5 414 15.5 417A6 6 0 0 1 3.5 417C3.5 414 7 411 9.5 405.5Z" fill="#cfcfcf"/><path d="M21 424L21 421L18 424Z" fill="#d8d8d8"/>
<circle cx="7.5" cy="436.5" r="5.3" fill="#cfcfcf"/><path d="M11 440.5L17 447.5" stroke="#cfcfcf" stroke-width="2.6" stroke-linecap="round"/><path d="M21 449.5L21 446.5L18 449.5Z" fill="#d8d8d8"/>
<rect x="0" y="454" width="24" height="1" fill="#3a3a3a"/><rect x="0" y="455" width="24" height="1" fill="#626262"/>
<path d="M2 477L3.5 468.5L10.5 463.5L15 468.5L10.5 474.5Z" fill="#cfcfcf"/><path d="M2.5 476.5L8 470.5" stroke="#535353" stroke-width="1"/><circle cx="8.6" cy="469.8" r="1.3" fill="#535353"/><path d="M11.5 462.5L13.5 460.5L18 465.5L16 467.5Z" fill="#cfcfcf"/><path d="M21 479L21 476L18 479Z" fill="#d8d8d8"/>
<text x="1.5" y="501.5" font-family="Liberation Serif,serif" font-size="22" fill="#cfcfcf">T</text><path d="M21 504L21 501L18 504Z" fill="#d8d8d8"/>
<path d="M4 510.9L4 525.9L7.5 522.6L10 528.4L12.5 527.4L10 521.6999999999999L14.5 521.4Z" fill="#1e1e1e" stroke="#cfcfcf" stroke-width="1"/><path d="M21 530.4L21 527.4L18 530.4Z" fill="#d8d8d8"/>
<path d="M2 553L15 540" stroke="#cfcfcf" stroke-width="1.5"/><path d="M21 557L21 554L18 557Z" fill="#d8d8d8"/>
<rect x="0" y="561" width="24" height="1" fill="#3a3a3a"/><rect x="0" y="562" width="24" height="1" fill="#626262"/>
<path d="M5.5 583.3C4 579.8 2 577.8 0.8 576.0C1.8 574.5999999999999 3.6 575.8 4.6 577.3L4.2 570.3C4.6 568.8 6.2 568.8 6.5 570.3L7 574.8L7.4 568.5C7.8 567.0999999999999 9.5 567.0999999999999 9.8 568.5L9.9 574.8L10.8 569.5C11.3 568.1999999999999 12.9 568.5 13 569.9L12.6 575.3L14 571.8C14.6 570.8 16 571.1999999999999 15.9 572.5C15.5 576.8 15 579.8 13 583.3Z" fill="#cfcfcf"/><path d="M21 585.8L21 582.8L18 585.8Z" fill="#d8d8d8"/>
<circle cx="7" cy="598.7" r="4.8" fill="#8a8a8a" stroke="#cfcfcf" stroke-width="1.6"/><path d="M10.8 602.7L16.5 608.7" stroke="#cfcfcf" stroke-width="2.6" stroke-linecap="round"/>
<rect x="-2" y="620" width="4" height="4" fill="#cfcfcf"/><rect x="-4" y="617" width="4" height="4" fill="#222" stroke="#cfcfcf" stroke-width=".8"/>
<path d="M13.5 621.5H17.5V625.5" fill="none" stroke="#cfcfcf" stroke-width="1.2"/><path d="M12 621.5l2.5-2.3v4.6zM17.5 627.5l-2.3-2.5h4.6z" fill="#cfcfcf"/>
<rect x="4.5" y="644.5" width="18" height="17" fill="#fff" stroke="#2a2a2a"/>
<rect x="-2" y="633.5" width="15.5" height="18" fill="#000" stroke="#d8d8d8" stroke-width="1.4"/>
<rect x="0.5" y="671.5" width="16" height="12" fill="none" stroke="#cfcfcf" stroke-width="1"/><circle cx="8.5" cy="677.5" r="3.8" fill="none" stroke="#cfcfcf" stroke-dasharray="1.1 1.1"/>
</svg></div>
<div class="a" style="left:701px;top:59px;width:263px;height:11px;background:linear-gradient(#3f3f3f,#353535);border-bottom:1px solid #282828"></div>
<svg class="a" style="left:726px;top:61px" width="10" height="8" viewBox="0 0 10 8"><path d="M4 0.5V7.5L0.5 4ZM8.5 0.5V7.5L5 4Z" fill="#dcdcdc"/></svg>
<div class="a" style="left:701px;top:71px;width:37px;height:614px;background:#535353"></div>
<div class="a" style="left:738px;top:71px;width:3px;height:614px;background:#2c2c2c"></div>
<div class="a" style="left:701px;top:110px;width:37px;height:2px;background:#2e2e2e"></div>
<div class="a" style="left:701px;top:112px;width:37px;height:1px;background:#626262"></div>
<div class="a" style="left:701px;top:151px;width:37px;height:2px;background:#2e2e2e"></div>
<div class="a" style="left:701px;top:153px;width:37px;height:1px;background:#626262"></div>
<div class="a" style="left:701px;top:220px;width:37px;height:2px;background:#2e2e2e"></div>
<div class="a" style="left:701px;top:222px;width:37px;height:1px;background:#626262"></div>
<svg class="a" style="left:709px;top:75px" width="22" height="4" viewBox="0 0 22 4"><rect x="0" y="0" width="1" height="3" fill="#2b2b2b"/><rect x="2" y="0" width="1" height="3" fill="#2b2b2b"/><rect x="4" y="0" width="1" height="3" fill="#2b2b2b"/><rect x="6" y="0" width="1" height="3" fill="#2b2b2b"/><rect x="8" y="0" width="1" height="3" fill="#2b2b2b"/><rect x="10" y="0" width="1" height="3" fill="#2b2b2b"/><rect x="12" y="0" width="1" height="3" fill="#2b2b2b"/><rect x="14" y="0" width="1" height="3" fill="#2b2b2b"/><rect x="16" y="0" width="1" height="3" fill="#2b2b2b"/><rect x="18" y="0" width="1" height="3" fill="#2b2b2b"/><rect x="20" y="0" width="1" height="3" fill="#2b2b2b"/></svg>
<svg class="a" style="left:709px;top:116px" width="22" height="4" viewBox="0 0 22 4"><rect x="0" y="0" width="1" height="3" fill="#2b2b2b"/><rect x="2" y="0" width="1" height="3" fill="#2b2b2b"/><rect x="4" y="0" width="1" height="3" fill="#2b2b2b"/><rect x="6" y="0" width="1" height="3" fill="#2b2b2b"/><rect x="8" y="0" width="1" height="3" fill="#2b2b2b"/><rect x="10" y="0" width="1" height="3" fill="#2b2b2b"/><rect x="12" y="0" width="1" height="3" fill="#2b2b2b"/><rect x="14" y="0" width="1" height="3" fill="#2b2b2b"/><rect x="16" y="0" width="1" height="3" fill="#2b2b2b"/><rect x="18" y="0" width="1" height="3" fill="#2b2b2b"/><rect x="20" y="0" width="1" height="3" fill="#2b2b2b"/></svg>
<svg class="a" style="left:709px;top:157px" width="22" height="4" viewBox="0 0 22 4"><rect x="0" y="0" width="1" height="3" fill="#2b2b2b"/><rect x="2" y="0" width="1" height="3" fill="#2b2b2b"/><rect x="4" y="0" width="1" height="3" fill="#2b2b2b"/><rect x="6" y="0" width="1" height="3" fill="#2b2b2b"/><rect x="8" y="0" width="1" height="3" fill="#2b2b2b"/><rect x="10" y="0" width="1" height="3" fill="#2b2b2b"/><rect x="12" y="0" width="1" height="3" fill="#2b2b2b"/><rect x="14" y="0" width="1" height="3" fill="#2b2b2b"/><rect x="16" y="0" width="1" height="3" fill="#2b2b2b"/><rect x="18" y="0" width="1" height="3" fill="#2b2b2b"/><rect x="20" y="0" width="1" height="3" fill="#2b2b2b"/></svg>
<svg class="a" style="left:708px;top:82px" width="26" height="24" viewBox="708 82 26 24"><g fill="none" stroke="#b4b4b4" stroke-width="1"><rect x="712.5" y="86.5" width="4" height="4"/><rect x="712.5" y="92.5" width="4" height="4"/></g><rect x="712" y="98" width="5" height="5" fill="#b4b4b4"/><path d="M722 101C727 98 728.5 92 725.5 87.5" fill="none" stroke="#b4b4b4" stroke-width="2"/><path d="M721 88.5L727.5 85.5L727 91Z" fill="#b4b4b4"/></svg>
<svg class="a" style="left:708px;top:123px" width="26" height="26" viewBox="708 123 26 26"><path d="M716 126.5L721 129V135L716 138L711 135V129Z" fill="none" stroke="#b4b4b4" stroke-width="1.2"/><path d="M711 129L716 131.5L721 129M716 131.5V138" fill="none" stroke="#b4b4b4" stroke-width="1"/><rect x="723" y="127" width="4" height="3" fill="#b4b4b4"/><rect x="723" y="132" width="4" height="3" fill="#b4b4b4"/><rect x="711" y="141" width="16" height="3.5" fill="#b4b4b4"/><path d="M722.5 142L726 142L724.2 144Z" fill="#333"/></svg>
<div class="t" style="left:712px;top:166px;font-size:19px;font-weight:bold;color:#b4b4b4;transform:scaleX(.92);transform-origin:0 0">A</div><div class="a" style="left:726px;top:166px;width:1px;height:20px;background:#b4b4b4"></div>
<div class="t" style="left:713px;top:193px;font-size:20px;font-weight:bold;color:#b4b4b4">¶</div>
<div class="a" style="left:741px;top:71px;width:223px;height:17px;background:#3a3a3a;border-bottom:1px solid #2c2c2c"></div><div class="ptab on" style="left:741px;top:71px;width:37px">颜色</div><div class="ptab" style="left:778px;top:71px;width:36px">色板</div><div class="a" style="left:741px;top:88px;width:223px;height:112px;background:#535353"></div><svg class="a" style="left:959px;top:76px" width="5" height="8" viewBox="0 0 5 8"><path d="M0.5 4L5 4L5 6L3 6.5Z" fill="#bbb"/></svg>
<div class="a" style="left:741px;top:200px;width:223px;height:3px;background:#2c2c2c"></div>
<div class="a" style="left:741px;top:203px;width:223px;height:17px;background:#3a3a3a;border-bottom:1px solid #2c2c2c"></div><div class="ptab on" style="left:741px;top:203px;width:37px">调整</div><div class="ptab" style="left:778px;top:203px;width:37px">样式</div><div class="a" style="left:741px;top:220px;width:223px;height:112px;background:#535353"></div><svg class="a" style="left:959px;top:208px" width="5" height="8" viewBox="0 0 5 8"><path d="M0.5 4L5 4L5 6L3 6.5Z" fill="#bbb"/></svg>
<div class="a" style="left:741px;top:332px;width:223px;height:3px;background:#2c2c2c"></div>
<div class="a" style="left:741px;top:335px;width:223px;height:17px;background:#3a3a3a;border-bottom:1px solid #2c2c2c"></div><div class="ptab on" style="left:741px;top:335px;width:37px">图层</div><div class="ptab" style="left:778px;top:335px;width:37px">通道</div><div class="ptab" style="left:815px;top:335px;width:38px">路径</div><div class="a" style="left:741px;top:352px;width:223px;height:333px;background:#535353"></div><svg class="a" style="left:959px;top:340px" width="5" height="8" viewBox="0 0 5 8"><path d="M0.5 4L5 4L5 6L3 6.5Z" fill="#bbb"/></svg>
<div class="a" style="left:756px;top:109px;width:20px;height:20px;background:#fff;border:1px solid #3a3a3a"></div>
<div class="a" style="left:745px;top:98px;width:22px;height:22px;background:#000;border:1px solid #9a9a9a;box-shadow:inset 0 0 0 1px #fff,inset 0 0 0 2px #000"></div>
<div class="t" style="left:784px;top:101px;font-size:12px;color:#f0f0f0">R</div>
<div class="a" style="left:800px;top:101px;width:81px;height:6px;background:linear-gradient(90deg,#000,#ff0000);border:1px solid #3a3a3a;border-bottom-color:#777"></div>
<svg class="a" style="left:795px;top:107px" width="11" height="10" viewBox="0 0 11 10"><path d="M5.5 0.5L10.5 6V9.5H0.5V6Z" fill="#bdbdbd" stroke="#2e2e2e" stroke-width=".8"/></svg>
<div class="inp" style="left:887px;top:99px">0</div>
<div class="t" style="left:784px;top:126px;font-size:12px;color:#f0f0f0">G</div>
<div class="a" style="left:800px;top:126px;width:81px;height:6px;background:linear-gradient(90deg,#000,#00ff00);border:1px solid #3a3a3a;border-bottom-color:#777"></div>
<svg class="a" style="left:795px;top:132px" width="11" height="10" viewBox="0 0 11 10"><path d="M5.5 0.5L10.5 6V9.5H0.5V6Z" fill="#bdbdbd" stroke="#2e2e2e" stroke-width=".8"/></svg>
<div class="inp" style="left:887px;top:124px">0</div>
<div class="t" style="left:784px;top:151px;font-size:12px;color:#f0f0f0">B</div>
<div class="a" style="left:800px;top:151px;width:81px;height:6px;background:linear-gradient(90deg,#000,#0000ff);border:1px solid #3a3a3a;border-bottom-color:#777"></div>
<svg class="a" style="left:795px;top:157px" width="11" height="10" viewBox="0 0 11 10"><path d="M5.5 0.5L10.5 6V9.5H0.5V6Z" fill="#bdbdbd" stroke="#2e2e2e" stroke-width=".8"/></svg>
<div class="inp" style="left:887px;top:149px">0</div>
<div class="a" style="left:747px;top:180px;width:200px;height:15px;border:1px solid #3a3a3a;background:linear-gradient(rgba(255,255,255,1) 0,rgba(255,255,255,0) 50%,rgba(0,0,0,0) 50%,rgba(0,0,0,1) 100%),linear-gradient(90deg,#ee1c1c 0,#fff200 17%,#00a651 34%,#00aeef 50%,#2a2f92 66%,#ec008c 81%,#ed1c24 100%)"></div>
<div class="a" style="left:938px;top:181px;width:8px;height:7px;background:#fff"></div><div class="a" style="left:938px;top:188px;width:8px;height:6px;background:#000"></div>
<div class="t" style="left:750px;top:226px;font-size:12px;color:#f4f4f4;letter-spacing:-.4px">添加调整</div>
<!--ADJ-->
<svg class="a" style="left:775px;top:245px" width="145" height="80" viewBox="775 245 145 80">
<defs><linearGradient id="ag" x1="0" x2="0" y1="0" y2="1"><stop offset="0" stop-color="#d2d2d2"/><stop offset="1" stop-color="#8e8e8e"/></linearGradient><linearGradient id="ah" x1="0" x2="1" y1="0" y2="0"><stop offset="0" stop-color="#333"/><stop offset="1" stop-color="#c8c8c8"/></linearGradient><linearGradient id="ad" x1="0" x2="1" y1="0" y2="1"><stop offset="0" stop-color="#c8c8c8"/><stop offset=".5" stop-color="#6e6e6e"/><stop offset="1" stop-color="#c8c8c8"/></linearGradient></defs>
<g stroke="#c2c2c2" stroke-width="1.6" fill="none"><path d="M803.0 258.5L805.6 258.5"/><path d="M801.3 262.5L803.2 264.4"/><path d="M797.3 264.2L797.3 266.8"/><path d="M793.3 262.5L791.4 264.4"/><path d="M791.6 258.5L789.0 258.5"/><path d="M793.3 254.5L791.4 252.6"/><path d="M797.3 252.8L797.3 250.2"/><path d="M801.3 254.5L803.2 252.6"/><circle cx="797.3" cy="258.5" r="3.8" stroke-width="1.2"/></g><path d="M797.3 254.7A3.8 3.8 0 0 1 797.3 262.3Z" fill="#c2c2c2"/>
<path d="M813 263V255l1.5 2l1.5-4l1.5 4l1.5-6l1.5 5l1.5-7l1.5 6l1.5-4l1.5 4l1.5-5l1.5 5l1.5-3V263Z" fill="url(#ag)"/>
<rect x="838.5" y="251.5" width="15" height="13" fill="#7d7d7d" stroke="#c2c2c2"/><path d="M838.5 256H853.5M838.5 260H853.5M843.5 251.5V264.5M848.5 251.5V264.5" stroke="#555" stroke-width=".8"/><path d="M839 264C847 263 845 253 853.5 252" fill="none" stroke="#eee" stroke-width="1.2"/>
<rect x="862.5" y="251.5" width="15" height="13" fill="#555" stroke="#c2c2c2"/><path d="M863 264L877 252V264Z" fill="#c2c2c2"/><path d="M865 256H869M867 254V258" stroke="#eee" stroke-width="1"/><path d="M871.5 261H875.5" stroke="#444" stroke-width="1"/>
<path d="M886 251H902L894 266Z" fill="url(#ag)" stroke="#c2c2c2" stroke-width="1"/>
<rect x="778.5" y="279.5" width="15" height="12" fill="url(#ag)" stroke="#c2c2c2"/><rect x="779" y="280" width="14" height="4" fill="#aaa"/><path d="M782 280V284M785.5 280V284M789 280V284" stroke="#777" stroke-width="1.5"/><rect x="779" y="285" width="14" height="6" fill="url(#ah)"/>
<g stroke="#c2c2c2" fill="none" stroke-width="1.2"><path d="M809.5 278V283M803 283.5H816M804.5 283.5L801.5 290M804.5 283.5L807.5 290M814.5 283.5L811.5 290M814.5 283.5L817.5 290"/></g><path d="M801 290H808A3.5 2.5 0 0 1 801 290ZM811 290H818A3.5 2.5 0 0 1 811 290Z" fill="#c2c2c2"/><path d="M807.5 279h4l-2 2.6z" fill="#c2c2c2"/>
<rect x="826.5" y="279.5" width="15" height="12" fill="#4a4a4a" stroke="#c2c2c2"/><rect x="833" y="280" width="8" height="11" fill="url(#ag)"/>
<path d="M849 280H852L853 278.5H858L859 280H862V287H849Z" fill="#c2c2c2"/><circle cx="855.5" cy="283.5" r="2.2" fill="#555"/><circle cx="861" cy="288" r="4.6" fill="#8a8a8a" fill-opacity=".85" stroke="#d8d8d8" stroke-width="1"/>
<circle cx="881.5" cy="282.5" r="4.3" fill="#cfcfcf"/><circle cx="878" cy="288" r="4.3" fill="#a8a8a8"/><circle cx="885" cy="288" r="4.3" fill="#bcbcbc"/><path d="M881.5 284.5L884 288L881.5 290L879 288Z" fill="#444"/>
<rect x="898.5" y="279.5" width="15" height="12" fill="#4c4c4c" stroke="#c2c2c2"/><g fill="#c2c2c2"><rect x="899" y="280" width="4" height="3"/><rect x="904" y="280" width="4" height="3" opacity=".6"/><rect x="909" y="280" width="4" height="3" opacity=".4"/><rect x="899" y="284" width="4" height="3" opacity=".7"/><rect x="904" y="284" width="4" height="3" opacity=".45"/><rect x="909" y="284" width="4" height="3" opacity=".3"/><rect x="899" y="288" width="4" height="3" opacity=".4"/><rect x="904" y="288" width="4" height="3" opacity=".25"/><rect x="909" y="288" width="4" height="3" opacity=".15"/></g>
<rect x="790.5" y="306.5" width="15" height="12" fill="#a8a8a8" stroke="#c2c2c2"/><ellipse cx="798" cy="312.5" rx="4" ry="2.6" fill="#4a4a4a" transform="rotate(-30 798 312.5)"/><path d="M791 318L805 307" stroke="#ddd" stroke-width="1"/>
<rect x="814.5" y="306.5" width="15" height="12" fill="url(#ad)" stroke="#c2c2c2"/><path d="M815 316L829 309" stroke="#5c5c5c" stroke-width="2.4"/>
<rect x="838.5" y="306.5" width="15" height="12" fill="#a8a8a8" stroke="#c2c2c2"/><path d="M839 316H842V314H845V312H848V310H851V308H853V311H850V313H847V315H844V317H839Z" fill="#3c3c3c"/>
<rect x="862.5" y="306.5" width="15" height="12" fill="#b4b4b4" stroke="#c2c2c2"/><path d="M863 307L870 312.5L863 318ZM877 307L870 312.5L877 318Z" fill="#6a6a6a"/>
<rect x="886.5" y="306.5" width="15" height="12" fill="url(#ah)" stroke="#c2c2c2"/>
</svg>
<div class="menu" style="left:460px;top:18px;width:217px;height:531px"><div class="mi" style="top:3px;width:211px"><span class="l" style="left:19px">校样设置<i>(U)</i></span><div class="arr" style="right:7px;top:5px"></div></div><div class="mi" style="top:23px;width:211px"><span class="l" style="left:19px">校样颜色<i>(L)</i></span><span class="s" style="right:17px">Ctrl+Y</span></div><div class="mi" style="top:44px;width:211px"><span class="l" style="left:19px">色域警告<i>(W)</i></span><span class="s" style="right:17px">Shift+Ctrl+Y</span></div><div class="mi" style="top:65px;width:211px"><span class="l" style="left:19px">像素长宽比<i>(S)</i></span><div class="arr" style="right:7px;top:5px"></div></div><div class="mi d" style="top:86px;width:211px"><span class="l" style="left:19px">像素长宽比校正<i>(P)</i></span></div><div class="mi d" style="top:107px;width:211px"><span class="l" style="left:19px"><i>32</i> 位预览选项<i>...</i></span></div><div class="msep" style="left:3px;top:131px;width:209px"></div><div class="mi" style="top:137px;width:211px"><span class="l" style="left:19px">放大<i>(I)</i></span><span class="s" style="right:17px">Ctrl++</span></div><div class="mi" style="top:158px;width:211px"><span class="l" style="left:19px">缩小<i>(O)</i></span><span class="s" style="right:17px">Ctrl+-</span></div><div class="mi" style="top:179px;width:211px"><span class="l" style="left:19px">按屏幕大小缩放<i>(F)</i></span><span class="s" style="right:17px">Ctrl+0</span></div><div class="mi" style="top:200px;width:211px"><span class="l" style="left:19px">实际像素<i>(A)</i></span><span class="s" style="right:17px">Ctrl+1</span></div><div class="mi" style="top:221px;width:211px"><span class="l" style="left:19px">打印尺寸<i>(Z)</i></span></div><div class="msep" style="left:3px;top:245px;width:209px"></div><div class="mi" style="top:252px;width:211px"><span class="l" style="left:19px">屏幕模式<i>(M)</i></span><div class="arr" style="right:7px;top:5px"></div></div><div class="msep" style="left:3px;top:275px;width:209px"></div><div class="mi" style="top:281px;width:211px"><svg class="chk" width="9" height="9" viewBox="0 0 9 9"><path d="M0.5 4.5 L3.2 7.6 L8.6 1.2" fill="none" stroke="#000" stroke-width="2"/></svg><span class="l" style="left:19px">显示额外内容<i>(X)</i></span><span class="s" style="right:17px">Ctrl+H</span></div><div class="mi" style="top:303px;width:211px"><span class="l" style="left:19px">显示<i>(H)</i></span><div class="arr" style="right:7px;top:5px"></div></div><div class="msep" style="left:3px;top:326px;width:209px"></div><div class="mi" style="top:332px;width:211px"><svg class="chk" width="9" height="9" viewBox="0 0 9 9"><path d="M0.5 4.5 L3.2 7.6 L8.6 1.2" fill="none" stroke="#000" stroke-width="2"/></svg><span class="l" style="left:19px">标尺<i>(R)</i></span></div><div class="msep" style="left:3px;top:356px;width:209px"></div><div class="mi" style="top:362px;width:211px"><span class="l" style="left:19px">对齐<i>(N)</i></span><span class="s" style="right:17px">Shift+Ctrl+;</span></div><div class="mi h" style="top:383px;width:211px"><span class="l" style="left:19px">对齐到<i>(T)</i></span><div class="arr" style="right:7px;top:5px"></div></div><div class="msep" style="left:3px;top:407px;width:209px"></div><div class="mi" style="top:413px;width:211px"><span class="l" style="left:19px">锁定参考线<i>(G)</i></span><span class="s" style="right:17px">Alt+Ctrl+;</span></div><div class="mi d" style="top:434px;width:211px"><span class="l" style="left:19px">清除参考线<i>(D)</i></span></div><div class="mi" style="top:455px;width:211px"><span class="l" style="left:19px">新建参考线<i>(E)...</i></span></div><div class="msep" style="left:3px;top:479px;width:209px"></div><div class="mi" style="top:485px;width:211px"><span class="l" style="left:19px">锁定切片<i>(K)</i></span></div><div class="mi d" style="top:506px;width:211px"><span class="l" style="left:19px">清除切片<i>(C)</i></span></div></div><div class="menu" style="left:671px;top:399px;width:128px;height:162px"><div class="mi" style="top:2px;width:122px"><div class="dash"></div><span class="l" style="left:19px">参考线<i>(G)</i></span></div><div class="mi h" style="top:23px;width:122px"><div class="dash"></div><span class="l" style="left:19px">网格<i>(R)</i></span></div><div class="mi" style="top:44px;width:122px"><div class="dash"></div><span class="l" style="left:19px">图层<i>(L)</i></span></div><div class="mi d" style="top:66px;width:122px"><div class="dash"></div><span class="l" style="left:19px">切片<i>(S)</i></span></div><div class="mi" style="top:86px;width:122px"><div class="dash"></div><span class="l" style="left:19px">文档边界<i>(D)</i></span></div><div class="msep" style="left:3px;top:110px;width:120px"></div><div class="mi d" style="top:116px;width:122px"><span class="l" style="left:19px">全部<i>(A)</i></span></div><div class="mi" style="top:137px;width:122px"><span class="l" style="left:19px">无<i>(N)</i></span></div></div>
</body></html>
